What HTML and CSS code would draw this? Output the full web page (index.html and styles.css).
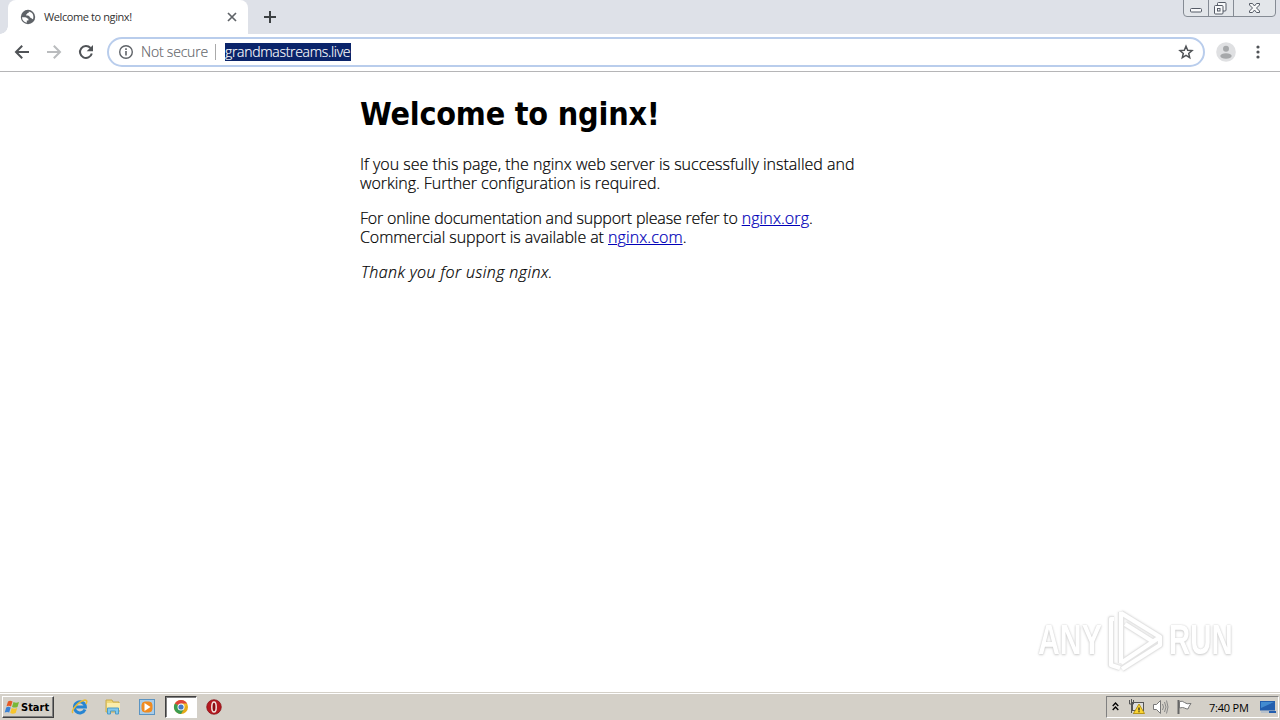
FILE: index.html
```html
<!DOCTYPE html>
<html lang="en">
<head>
<meta charset="utf-8">
<title>Welcome to nginx!</title>
<link rel="stylesheet" href="styles.css">
</head>
<body>
<div class="desktop">
  <header class="tabstrip">
    <div class="corner"></div>
    <div class="tab">
      <svg class="globe" width="16" height="16" viewBox="0 0 16 16"><circle cx="8" cy="8" r="7.200" fill="#5f6368"/><path d="M2 8.300 5 8.200c2 0 2 1.500 3.400 1.500v1.800H6.800v2.200C4 13 2 11 2 8.300zM8.800 2.500c.3 1.100-.3 1.500-1.500 1.700-.2 1.200-1.300 1-1.300 2 .7.9 3.200-.3 3.700 1.700.4 1 2 .8 2.300 1.900l1 .4c1.300-3.500-.3-6.900-4.200-7.700z" fill="#fff"/></svg>
      <span class="tab-title">Welcome to nginx!</span>
      <svg class="tab-close" width="10" height="10" viewBox="0 0 10 10"><path d="m1 1 8 8M9 1 1 9" stroke="#5f6368" stroke-width="1.700"/></svg>
    </div>
    <svg class="newtab" width="12" height="12" viewBox="0 0 12 12"><path d="M6 0v12M0 6h12" stroke="#3c4043" stroke-width="2"/></svg>
    <svg class="winbuttons" width="93" height="17" viewBox="0 0 93 17"><path d="M.5 0v13q0 3.500 3.500 3.500h85q3.500 0 3.500-3.500V0" fill="#e3e6ea" stroke="#858b94"/><path d="M25.500 0v16M50.500 0v16" stroke="#858b94"/><g fill="#f8f9fa" stroke="#555b66"><rect x="7.500" y="8.500" width="11" height="3.500" rx="1"/><rect x="34.500" y="2.500" width="8.500" height="8.500" rx="1"/><rect x="31.500" y="5.500" width="8.500" height="8.500" rx="1"/><rect x="34.500" y="8.500" width="2.500" height="2.500"/><path d="M66.500 3.500h3l2 2.500 2-2.500h3v1.500L73.500 8l3 3v1.500h-3l-2-2.500-2 2.500h-3V11l3-3-3-3z"/></g></svg>
  </header>

  <nav class="toolbar">
    <svg class="back" width="16" height="16" viewBox="0 0 16 16"><path d="M15 8H2.500M8.200 1.800 2 8l6.200 6.200" fill="none" stroke="#505357" stroke-width="2"/></svg>
    <svg class="forward" width="16" height="16" viewBox="0 0 16 16"><path d="M1 8h12.500M7.800 1.800 14 8l-6.200 6.200" fill="none" stroke="#babcbe" stroke-width="2"/></svg>
    <svg class="reload" width="16" height="16" viewBox="0 0 16 16"><path d="M13.800 9.500A6 6 0 1 1 12.500 4" fill="none" stroke="#505357" stroke-width="2"/><path d="M15 1v6.300H8.700z" fill="#505357"/></svg>
    <div class="omnibox">
      <svg class="info" width="16" height="16" viewBox="0 0 16 16"><circle cx="8" cy="8" r="6.300" fill="none" stroke="#5f6368" stroke-width="1.400"/><path d="M8 7v4.500M8 4.300V6" stroke="#5f6368" stroke-width="1.600"/></svg>
      <span class="security">Not secure</span>
      <span class="divider"></span>
      <span class="url">grandmastreams.live</span>
      <svg class="star" width="16" height="16" viewBox="0 0 16 16"><path d="m8 2.200 1.700 4 4.300.4-3.300 2.800 1 4.200L8 11.400l-3.700 2.200 1-4.200L2 6.600l4.300-.4z" fill="none" stroke="#505357" stroke-width="1.500"/></svg>
    </div>
    <svg class="avatar" width="20" height="20" viewBox="0 0 20 20"><circle cx="10" cy="10" r="9.800" fill="#dfe0e2"/><circle cx="10" cy="6.800" r="3" fill="#a6a8aa"/><ellipse cx="10" cy="14" rx="5.700" ry="2.800" fill="#a6a8aa"/></svg>
    <svg class="menu" width="4" height="14" viewBox="0 0 4 14"><g fill="#505357"><circle cx="2" cy="2" r="1.600"/><circle cx="2" cy="7" r="1.600"/><circle cx="2" cy="12" r="1.600"/></g></svg>
  </nav>

  <main class="page">
    <article class="content">
      <h1>Welcome to nginx!</h1>
      <p><span class="intro">If you see this page, the nginx web server is successfully installed and</span><br><span class="config">working. Further configuration is required.</span></p>
      <p><span class="docs">For online documentation and support please refer to <a>nginx.org</a>.</span><br><span class="support">Commercial support is available at <a>nginx.com</a>.</span></p>
      <p class="thanks"><em>Thank you for using nginx.</em></p>
    </article>
    <div class="watermark">
      <span class="any">ANY</span>
      <svg width="58" height="66" viewBox="0 0 58 66"><g fill="none" stroke-linejoin="round"><g stroke="#e4e4e4" stroke-width="6"><path d="M14 5v51M14 6l39 24-39 26M7 12H4v46l9 3M15 62l38-24V30M18 17l27 17"/></g><g stroke="#fff" stroke-width="4"><path d="M14 5v51M14 6l39 24-39 26M7 12H4v46l9 3M15 62l38-24V30M18 17l27 17"/></g></g></svg>
      <span class="run">RUN</span>
    </div>
  </main>

  <footer class="taskbar">
    <div class="start">
      <svg width="17" height="15" viewBox="0 0 17 15"><path d="M4 1.500q2-1.500 4.500 0L7 6.500q-2-1.400-4.500-.2z" fill="#e65a24"/><path d="M9.500 2q2.500 1.300 5.500 0l-1.500 5Q11 8 8 7z" fill="#79b836"/><path d="M2.200 7.500q2-1.300 4.500 0L5.200 12.600q-2-1.300-4.500 0z" fill="#3a82d5"/><path d="M7.700 8q2.500 1.300 5.500 0l-1.500 5q-3 1.300-5.500 0z" fill="#f7c52c"/></svg>
      <span>Start</span>
    </div>
    <svg class="ie" width="18" height="18" viewBox="0 0 18 18"><path d="M14 11.500a5.500 5.500 0 1 1 .4-2.500H5" fill="none" stroke="#2785d2" stroke-width="3"/><path d="M2 15C-1 13 8 3 14 2q3 0 1 4" fill="none" stroke="#e9bb35" stroke-width="1.500"/></svg>
    <svg class="folder" width="18" height="18" viewBox="0 0 18 18"><path d="M2 2h6l1 2h6v10H2z" fill="#efd777" stroke="#c9ab4b"/><path d="M3 5h13v7H3z" fill="#faedac"/><path d="M3.500 16v-6h11v6h-3v-3h-5v3z" fill="#80c8ed" stroke="#4d9bc7"/></svg>
    <svg class="media" width="18" height="18" viewBox="0 0 18 18"><rect x="1.500" y="1.500" width="15" height="15" fill="#a9cce8" stroke="#5b94c2"/><rect x="4" y="4" width="10" height="10" rx="3" fill="#f08b21" stroke="#f08b21"/><path d="m6.500 5 6 4-6 4z" fill="#fff"/></svg>
    <div class="task"><svg width="16" height="16" viewBox="0 0 16 16"><circle cx="8" cy="8" r="7" fill="#e6aa18"/><path d="M8 8 1.900 4.500A7 7 0 0 1 14.100 4.500z" fill="#de4439"/><path d="M8 8 1.900 4.500A7 7 0 0 0 8 15l3-5z" fill="#3b9c50"/><path d="M8 4.500h6.100L11 10z" fill="#f1bd2d"/><circle cx="8" cy="8" r="3.500" fill="#fff"/><circle cx="8" cy="8" r="2.600" fill="#4579c5"/></svg></div>
    <svg class="opera" width="16" height="16" viewBox="0 0 16 16"><circle cx="8" cy="8" r="7.300" fill="#b51920" stroke="#830d12" stroke-width=".7"/><ellipse cx="8" cy="8" rx="2.200" ry="5" fill="#8b0c12" stroke="#f2e4e0" stroke-width="1.500"/></svg>
    <div class="tray">
      <svg class="chevrons" width="7" height="9" viewBox="0 0 7 9"><path d="m.7 4 2.800-3 2.800 3M.7 8l2.800-3 2.800 3" fill="none" stroke="#000" stroke-width="1.300"/></svg>
      <svg class="network" width="17" height="16" viewBox="0 0 17 16"><rect x="4.500" y="3.500" width="11" height="8" fill="#ddd" stroke="#555"/><path d="M5 14.500h8" stroke="#555"/><path d="M1.500 1v4h4V1M3.500 0v14" fill="none" stroke="#555"/><path d="m11 5 5.500 9.500h-11z" fill="#fbd532" stroke="#b89518"/><path d="M11 8.500v3M11 12.300v1" stroke="#222" stroke-width="1.300"/></svg>
      <svg class="sound" width="17" height="16" viewBox="0 0 17 16"><path d="M1.500 5.500h3l4-4v13l-4-4h-3z" fill="#fff" stroke="#777"/><path d="M10.500 5q2 3 0 6M12.500 3q3 5 0 10M14.500 1.500q3 6.500 0 13" fill="none" stroke="#888"/></svg>
      <svg class="flag" width="17" height="16" viewBox="0 0 17 16"><path d="M2.500 1v14" stroke="#666" stroke-width="2"/><path d="M3.500 2.500q3-1 5 1t6.500 1q-2 2.500-3 5.500-2 0-3.500-1t-5 0z" fill="#fff" stroke="#777"/></svg>
      <span class="clock">7:40 PM</span>
      <svg class="monitor" width="16" height="14" viewBox="0 0 16 14"><path d="M0 1h15v9.500H0z" fill="#235eae"/><path d="M1 2h13L1 8z" fill="#438bd0"/><path d="M1 11.500h11v1H1z" fill="#9ab3cf"/><path d="M9 12h7" stroke="#235eae" stroke-width="2"/></svg>
    </div>
  </footer>
</div>
</body>
</html>
```

FILE: styles.css
```css
* { box-sizing: border-box; }
body { margin: 0; width: 1280px; height: 720px; overflow: hidden; background: #fff; color: #000; font-family: "Open Sans", "Noto Sans", sans-serif; }
svg { display: block; flex: none; }
span { white-space: nowrap; }
.desktop { display: flex; flex-direction: column; height: 720px; }
.tabstrip { height: 34px; flex: none; display: flex; background: #dee1e8; }
.corner { width: 8px; background: radial-gradient(circle at 0 0, #dee1e8 7.5px, #fff 8px) 0 26px / 8px 8px no-repeat; }
.tab { width: 240px; height: 34px; display: flex; align-items: center; padding-left: 12px; background: #fff; border-radius: 8px 8px 0 0; }
.tab-title { width: 180px; margin-left: 8px; padding-bottom: 1px; font-size: 11px; letter-spacing: -.4px; color: #333; }
.tab-close { margin-left: 3px; }
.newtab { margin: 11px 0 0 16px; }
.winbuttons { margin-left: auto; margin-right: 4px; }
.toolbar { height: 38px; flex: none; display: flex; align-items: center; padding: 0 20px 2px 14px; border-bottom: 1px solid #b5b5b7; }
.forward, .reload { margin-left: 16px; }
.omnibox { width: 1098px; height: 30px; flex: none; margin-left: 13px; border: 2px solid #b9cdec; border-radius: 15px; display: flex; align-items: center; padding: 0 9px; font-size: 14px; font-weight: 300; -webkit-text-stroke: .15px; }
.security { width: 67px; margin-left: 7px; color: #5f6368; letter-spacing: -.2px; }
.divider { width: 1px; height: 16px; background: #aaa; margin: 0 9px 0 7px; }
.url { height: 18px; line-height: 18px; width: 126px; background: #0a246a; color: #fff; letter-spacing: -.3px; }
.star { margin-left: auto; }
.avatar { margin-left: 11px; }
.menu { margin-left: 20px; }
.page { flex: 1; display: flex; flex-direction: column; background: #fff; }
.content { width: 560px; margin: 0 auto; font-size: 16px; line-height: 19px; font-weight: 300; -webkit-text-stroke: .2px; }
h1 { margin: 23px 0 0; font: bold 32px/39px "DejaVu Sans Condensed", "DejaVu Sans", sans-serif; font-stretch: condensed; letter-spacing: -.2px; white-space: nowrap; -webkit-text-stroke: 0; }
p { margin: 21px 0 0; }
p + p { margin-top: 16px; }
.config { letter-spacing: -.05px; }
.docs { letter-spacing: -.19px; }
.support { letter-spacing: -.07px; }
a { color: #0000b8; letter-spacing: .1px; text-decoration: underline; text-decoration-thickness: 1px; text-underline-offset: 1px; }
.thanks { padding-left: 1px; letter-spacing: .42px; }
.watermark { display: flex; align-items: center; margin: auto 47px 19px auto; color: #fff; font: bold 42px/58px "Liberation Sans", sans-serif; text-shadow: 0 0 2px #ccc, 0 1px 3px #ccc; }
.watermark span { transform-origin: left; }
.any { width: 64px; transform: scaleX(.72); }
.run { width: 64px; transform: scaleX(.7); }
.watermark svg { margin: 0 4px 0 5px; filter: drop-shadow(0 0 1px #ddd); }
.taskbar { height: 28px; flex: none; display: flex; align-items: center; background: #d4d0c8; border-top: 1px solid #d4d0c8; box-shadow: inset 0 1px #fff; padding: 1px 1px 0 2px; }
.start { width: 52px; height: 22px; display: flex; align-items: center; padding-left: 1px; border: 1px solid; border-color: #fff #404040 #404040 #fff; box-shadow: inset -1px -1px #808080; font: bold 11px "DejaVu Sans Condensed", sans-serif; }
.start span { padding-top: 1px; }
.ie { margin-left: 17px; }
.folder { margin-left: 15px; }
.media { margin-left: 16px; }
.task { width: 32px; height: 22px; margin-left: 9px; border: 1px solid; border-color: #404040 #fff #fff #404040; background: #fff; box-shadow: inset 1px 1px #808080; padding: 2px 7px; }
.opera { margin-left: 9px; }
.tray { width: 173px; height: 22px; margin-left: auto; margin-right: 0; border: 1px solid; border-color: #808080 #fff #fff #808080; display: flex; align-items: center; padding-left: 5px; }
.chevrons { margin-bottom: 2px; }
.network { margin-left: 9px; }
.sound, .flag { margin-left: 7px; }
.clock { width: 40px; margin-left: 16px; font-size: 11px; letter-spacing: -.2px; }
.monitor { margin-left: 11px; }
```
